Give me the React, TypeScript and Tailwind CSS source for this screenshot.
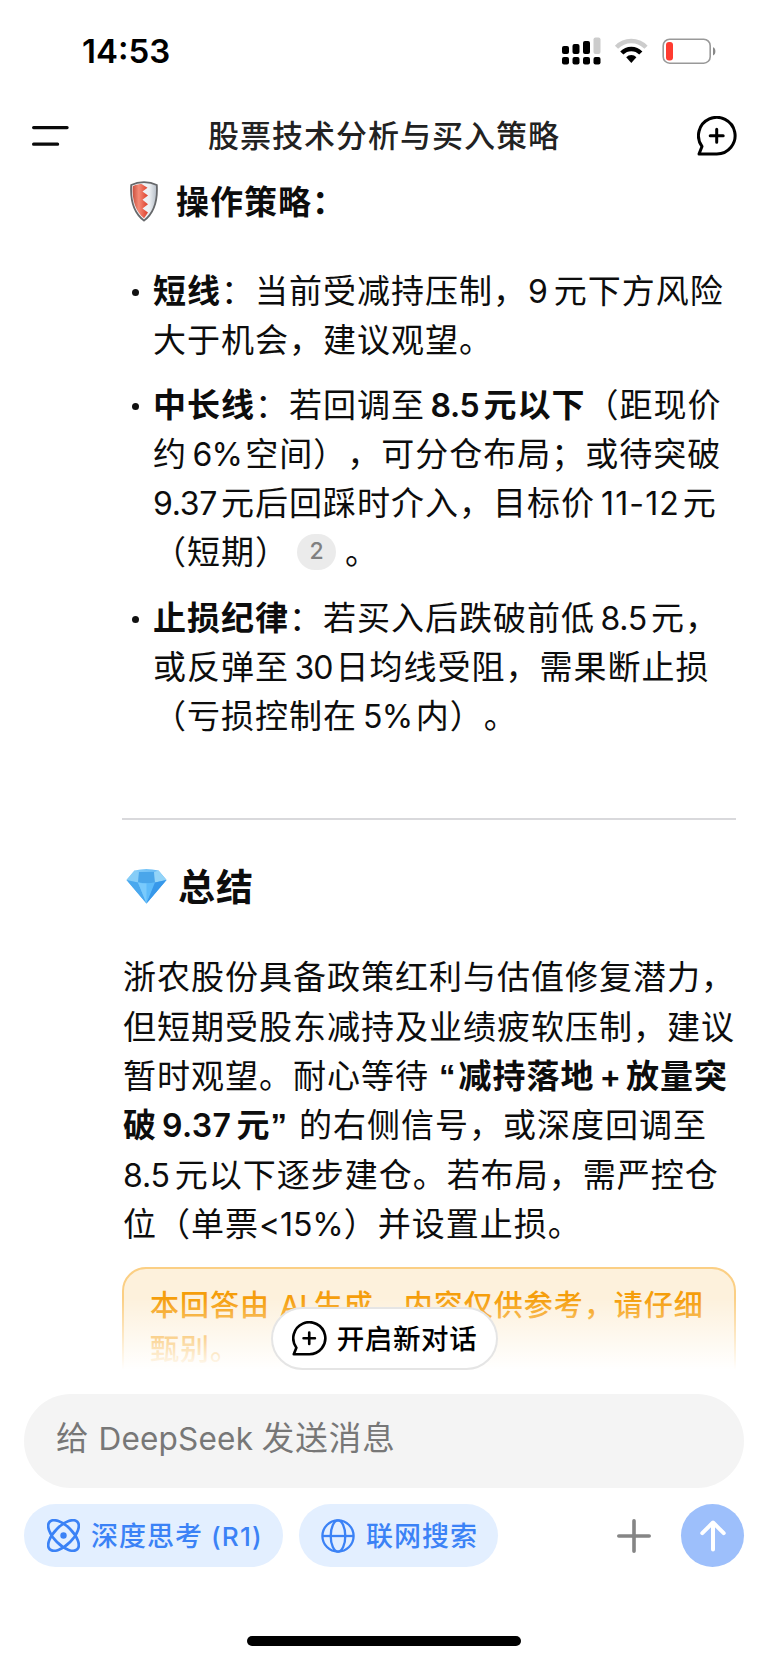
import type { ReactNode } from 'react'

/** Latin run set inside Chinese text, with a small gap on either side. */
function L({ children, className = 'mr-[4px] ml-[5.5px] tracking-[-.3px]' }: { children: ReactNode; className?: string }) {
  return <span className={`text-[.97em] ${className}`}>{children}</span>
}

/** Curly quotation mark. */
function Q({ children, className }: { children: ReactNode; className: string }) {
  return <span className={`font-['Liberation_Sans'] font-bold ${className}`}>{children}</span>
}

function Line({ children }: { children: ReactNode }) {
  return <div className="whitespace-nowrap">{children}</div>
}

function B({ children }: { children: ReactNode }) {
  return <strong className="font-semibold">{children}</strong>
}

function Bullet({ children }: { children: ReactNode }) {
  return (
    <li className="flex">
      <span className="mt-[22px] mr-[14px] ml-[10px] size-[7px] shrink-0 rounded-full bg-[#111]" />
      <div>{children}</div>
    </li>
  )
}

function ChatPlus({ className }: { className: string }) {
  return (
    <svg viewBox="0 0 40 40" className={className} fill="none" stroke="currentColor" strokeWidth="3" strokeLinejoin="round" strokeLinecap="round">
      <path d="M2 38 5 30.5A18.3 18.3 0 1 1 19.7 38Z" />
      <path d="M19.7 13.2v13M13.2 19.7h13" />
    </svg>
  )
}

function Shield() {
  return (
    <svg viewBox="0 0 28 41" className="h-[41px] w-7 shrink-0">
      <defs>
        <linearGradient id="sr" x1="0" x2="1">
          <stop offset="0" stopColor="#c8503f" />
          <stop offset=".4" stopColor="#f58a76" />
          <stop offset="1" stopColor="#dd3f2b" />
        </linearGradient>
        <linearGradient id="sw" x1="0" x2="1">
          <stop offset="0" stopColor="#f2f5f8" />
          <stop offset=".7" stopColor="#eceff2" />
          <stop offset="1" stopColor="#b4bcc6" />
        </linearGradient>
      </defs>
      <path d="M1.200 4C6 1.600 10 1.200 14 1.200S22 1.600 26.800 4C27.800 20 24 32 14 39.600 4 32 .2 20 1.200 4Z" fill="url(#sw)" stroke="#66686b" strokeWidth="1.800" />
      <path d="M2.700 5.200C6.500 3.400 10 3 11.500 3l6 3.800-5 3.600 5.500 4.200-5.500 4.200 5.500 4.400-5.500 4.200 5.500 4.200-4 5.600C5.500 30.500 2 19 2.700 5.200Z" fill="url(#sr)" />
    </svg>
  )
}

function Gem() {
  return (
    <svg viewBox="0 0 41 36" className="h-9 w-[41px] shrink-0">
      <defs>
        <linearGradient id="gm" x1="0" x2="1" y2="1">
          <stop offset="0" stopColor="#8fd4fb" />
          <stop offset="1" stopColor="#2f95ec" />
        </linearGradient>
      </defs>
      <path d="M8.500 2.500Q20 -.5 32.500 2.500L40.500 12 20.500 35.500.5 12Z" fill="url(#gm)" />
      <path d="M8.500 2.500 13 4 12 14.500.5 12Z" fill="#86cdf7" />
      <path d="M13 4h15l1 10.500q-8 1.500-17 0Z" fill="#4aa6ea" />
      <path d="M28 4l4.500-1.500L40.500 12 29 14.500Z" fill="#93d4f8" />
      <path d="M.5 12 12 14.500 20.500 35.500Z" fill="#4aa8ee" />
      <path d="M12 14.500q9 1.500 17 0L20.500 35.500Z" fill="#5dbbfa" />
      <path d="M12 14.500q4 1 8.500 1v20Z" fill="#79cafc" />
      <path d="M40.500 12 29 14.500 20.500 35.500Z" fill="#3798ea" />
    </svg>
  )
}

function StatusIcons() {
  return (
    <svg viewBox="0 0 156 30" className="h-[30px] w-[156px]">
      <g>
        <rect x="0" y="10" width="7" height="8" rx="2" />
        <rect x="10.500" y="8" width="7" height="10" rx="2" />
        <rect x="21" y="5" width="7" height="13" rx="2" />
        <rect x="31.500" y="1.500" width="7" height="16.500" rx="2" fill="#ccc" />
        <rect x="0" y="21" width="7" height="7.500" rx="2" />
        <rect x="10.500" y="21" width="7" height="7.500" rx="2" />
        <rect x="21" y="21" width="7" height="7.500" rx="2" />
        <rect x="31.500" y="21" width="7" height="7.500" rx="2" />
      </g>
      <g fill="none" strokeWidth="4.400">
        <path d="M54.500 11.200a20.500 20.500 0 0 1 29.500 0" stroke="#ccc" />
        <path d="M59.800 17a13.200 13.200 0 0 1 19 0" stroke="#000" />
      </g>
      <path d="M64.200 21.200a7.200 7.200 0 0 1 10.200 0L69.300 27Z" />
      <rect x="101.200" y="3.200" width="47" height="24" rx="6.500" fill="none" stroke="#999" strokeWidth="1.600" />
      <rect x="104" y="6" width="7" height="18.400" rx="3" fill="#ff3b30" />
      <path d="M151 11.200c3.200 1 3.200 7.200 0 8.200Z" fill="#888" />
    </svg>
  )
}

export default function App() {
  return (
    <div className="flex h-[1663px] w-[768px] flex-col overflow-hidden bg-white font-[Inter,'Noto_Sans_CJK_SC',sans-serif] text-[#0d0d0d] [text-autospace:no-autospace] [text-spacing-trim:space-all]">
      <div className="flex h-[104px] shrink-0 items-start justify-between pr-[50px] pl-[82px]">
        <span className="pt-[30px] text-[33px] leading-[43px] font-semibold text-black">14:53</span>
        <div className="pt-[36px]">
          <StatusIcons />
        </div>
      </div>

      <header className="flex h-[64px] shrink-0 items-center justify-between pr-[31px] pl-8">
        <svg viewBox="0 0 38 22" className="h-[22px] w-[38px]" stroke="#0a0a0a" strokeWidth="3.200" strokeLinecap="round">
          <path d="M1.600 2.600h33.500M1.600 19.200h24" />
        </svg>
        <h1 className="pt-px pl-px text-[31px] font-medium tracking-[1px] text-[#222]">股票技术分析与买入策略</h1>
        <ChatPlus className="size-10 text-black" />
      </header>

      <main className="relative h-[1208px] shrink-0 overflow-hidden pr-8 pl-[122px]">
        <div className="flex h-[66px] items-center pl-2">
          <Shield />
          <h2 className="ml-[18px] pt-1 text-[33px] font-semibold tracking-[1px]">操作策略：</h2>
        </div>

        <ul className="mt-[33px] flex flex-col gap-[16px] text-[33px] leading-[49.100px] tracking-[1px]">
          <Bullet>
            <Line><B>短线</B>：当前受减持压制，<L className="mr-[5px] ml-px">9</L>元下方风险</Line>
            <Line>大于机会，建议观望。</Line>
          </Bullet>
          <Bullet>
            <Line><B>中长线</B>：若回调至<B><L>8.5</L>元以下</B>（距现价</Line>
            <Line>约<L className="mr-[3px] ml-[5.5px] tracking-[-.8px]">6%</L>空间），可分仓布局；或待突破</Line>
            <Line><L className="mr-[4px] tracking-[-.3px]">9.37</L>元后回踩时介入，目标价<L className="mr-[3px] ml-[6px] tracking-[1.100px]">11-12</L>元</Line>
            <Line>
              （短期）
              <span className="mr-[9px] ml-2 inline-flex h-[36px] w-[39px] items-center justify-center rounded-full bg-[#ebebeb] align-[5px] text-[23px] leading-none font-medium tracking-normal text-[#808080]">2</span>
              。
            </Line>
          </Bullet>
          <Bullet>
            <Line><B>止损纪律</B>：若买入后跌破前低<L>8.5</L>元，</Line>
            <Line>或反弹至<L className="mr-[3px] ml-[5.5px] tracking-[-1px]">30</L>日均线受阻，需果断止损</Line>
            <Line>（亏损控制在<L className="mr-[3.500px] ml-[6px] tracking-[-.8px]">5%</L>内）。</Line>
          </Bullet>
        </ul>

        <hr className="mt-[77px] border-0 border-t-2 border-[#d9d9dc]" />

        <div className="mt-[36px] flex h-[60px] items-center pl-1">
          <Gem />
          <h2 className="ml-[11px] pt-1 text-[37px] font-semibold tracking-[1px]">总结</h2>
        </div>

        <div className="mt-[37.500px] pl-px text-[33px] leading-[49.300px] tracking-[1px]">
          <Line>浙农股份具备政策红利与估值修复潜力，</Line>
          <Line>但短期受股东减持及业绩疲软压制，建议</Line>
          <Line>暂时观望。耐心等待<B><Q className="mr-[2px] ml-[10px]">“</Q>减持落地<L className="mr-[4px] ml-[5px]">+</L>放量突</B></Line>
          <Line><B>破<L className="mr-[5px] ml-[5px] tracking-[.4px]">9.37</L>元<Q className="mr-[11px]">”</Q></B>的右侧信号，或深度回调至</Line>
          <Line><L className="mr-[5px] tracking-[-.2px]">8.5</L>元以下逐步建仓。若布局，需严控仓</Line>
          <Line>位（单票<L className="tracking-[-.1px]">&lt;15%</L>）并设置止损。</Line>
        </div>

        <div className="mt-[17.500px] h-[140px] rounded-[24px] border-2 border-[#fbcf84] bg-[#fdf1dc] px-[26px] pt-[15px] text-[29px] leading-[43px] font-medium tracking-[1px] text-[#f59e0b]">
          <Line>本回答由<L className="mr-[7px] ml-[10px] tracking-[-.5px]">AI</L>生成，内容仅供参考，请仔细</Line>
          <Line>甄别。</Line>
        </div>

        <div className="absolute inset-x-0 bottom-0 h-[78px] bg-linear-to-b from-transparent to-white to-92%" />

        <button className="absolute top-[1139px] left-[271px] flex h-[63px] w-[227px] items-center justify-center gap-[10px] rounded-full border-2 border-[#e5e5e5] bg-white text-[27.500px] font-medium tracking-[.6px] text-black">
          <ChatPlus className="size-[35px]" />
          <span className="pt-0.5">开启新对话</span>
        </button>
      </main>

      <footer className="flex flex-1 flex-col px-6 pt-[18px]">
        <div className="flex h-[94px] items-center rounded-full bg-[#f4f4f4] pb-1 pl-8 text-[32.500px] tracking-[1px] text-[#777]">
          给<L className="mr-[8.500px] ml-[9px] tracking-[.2px]">DeepSeek</L>发送消息
        </div>

        <div className="mt-4 flex h-[63px] items-center text-[27px] text-[#3b82f6]">
          <button className="flex h-full w-[259px] items-center rounded-full bg-[#e3efff] pl-[23px] tracking-[1px]">
            <svg viewBox="0 0 33 33" className="size-[33px]" fill="none" stroke="currentColor" strokeWidth="2.700">
              <ellipse cx="16.500" cy="16.500" rx="19.500" ry="9.300" transform="rotate(45 16.500 16.500)" />
              <ellipse cx="16.500" cy="16.500" rx="19.500" ry="9.300" transform="rotate(-45 16.500 16.500)" />
              <circle cx="16.500" cy="16.500" r="3.200" fill="currentColor" stroke="none" />
            </svg>
            <span className="ml-[11px] pt-[3px] font-medium">深度思考<L className="ml-[8px] tracking-[1.200px]">(R1)</L></span>
          </button>
          <button className="ml-4 flex h-full w-[199px] items-center rounded-full bg-[#e3efff] pl-[22px] tracking-[1px]">
            <svg viewBox="0 0 34 34" className="size-[34px]" fill="none" stroke="currentColor" strokeWidth="2.300">
              <circle cx="17" cy="17" r="15.600" />
              <ellipse cx="17" cy="17" rx="7.300" ry="15.600" />
              <path d="M1.400 17h31.200" />
            </svg>
            <span className="ml-[11px] pt-[3px] font-medium">联网搜索</span>
          </button>
          <svg viewBox="0 0 34 34" className="ml-auto size-[34px]" stroke="#858585" strokeWidth="3.600" strokeLinecap="round">
            <path d="M17 1.800v30.400M1.800 17h30.400" />
          </svg>
          <div className="ml-[30px] flex size-[63px] items-center justify-center rounded-full bg-[#9dbffb]">
            <svg viewBox="0 0 26 32" className="h-8 w-[26px]" fill="none" stroke="#fff" strokeWidth="4" strokeLinecap="round" strokeLinejoin="round">
              <path d="M13 29.500V3M2.300 13.200 13 2.500l10.700 10.700" />
            </svg>
          </div>
        </div>

        <div className="mx-auto mt-auto mb-[17px] h-[10px] w-[274px] rounded-full bg-black" />
      </footer>
    </div>
  )
}
